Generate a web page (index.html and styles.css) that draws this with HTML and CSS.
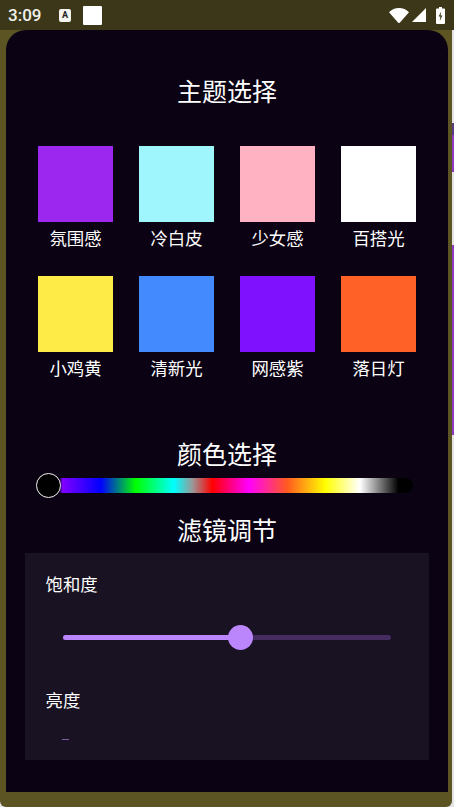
FILE: index.html
```html
<!DOCTYPE html>
<html lang="zh">
<head>
<meta charset="utf-8">
<title>主题选择</title>
<link rel="stylesheet" href="styles.css">
</head>
<body>
<header class="statusbar">
  <span class="time">3:09</span>
  <span class="app-a">A</span>
  <span class="app-blank"></span>
  <span class="status-right">
    <svg class="ic-wifi" viewBox="0 0 20 15"><path d="M0 4.200C2.600 1.600 6.100 0 10 0s7.400 1.600 10 4.200L11 14.500a1.300 1.300 0 0 1-2 0z"/></svg>
    <svg class="ic-signal" viewBox="0 0 14 14"><path d="M14 0v14H0z"/></svg>
    <svg class="ic-battery" viewBox="0 0 9 17"><path fill-rule="evenodd" d="M3 0h3v1.500h2a1 1 0 0 1 1 1V16a1 1 0 0 1-1 1H1a1 1 0 0 1-1-1V2.500a1 1 0 0 1 1-1h2zM5.200 4.500 2.600 9.500h1.800l-.6 4.500 2.600-5.600H4.600z"/></svg>
  </span>
</header>
<div class="below">
  <div class="scrim">
    <main class="sheet">
      <h2 class="title title-top">主题选择</h2>
      <div class="swatches">
        <div class="swatch-item"><div class="swatch c1"></div><span class="name">氛围感</span></div>
        <div class="swatch-item"><div class="swatch c2"></div><span class="name">冷白皮</span></div>
        <div class="swatch-item"><div class="swatch c3"></div><span class="name">少女感</span></div>
        <div class="swatch-item"><div class="swatch c4"></div><span class="name">百搭光</span></div>
        <div class="swatch-item"><div class="swatch c5"></div><span class="name">小鸡黄</span></div>
        <div class="swatch-item"><div class="swatch c6"></div><span class="name">清新光</span></div>
        <div class="swatch-item"><div class="swatch c7"></div><span class="name">网感紫</span></div>
        <div class="swatch-item"><div class="swatch c8"></div><span class="name">落日灯</span></div>
      </div>
      <h2 class="title title-color">颜色选择</h2>
      <div class="hue"><span class="hue-thumb"></span></div>
      <h2 class="title title-filter">滤镜调节</h2>
      <section class="panel">
        <div class="label">饱和度</div>
        <div class="slider">
          <div class="track"><div class="track-on"></div></div>
          <span class="thumb"></span>
        </div>
        <div class="label label-second">亮度</div>
        <div class="sliver"></div>
      </section>
    </main>
  </div>
  <div class="edge">
    <i class="e-light e1"></i><i class="e-dark"></i><i class="e-purple e2"></i><i class="e-light e3"></i><i class="e-purple e4"></i><i class="e-light e5"></i>
  </div>
</div>
</body>
</html>
```
FILE: styles.css
```css
* { box-sizing: border-box; }
html, body { margin: 0; height: 100%; }
body {
  width: 454px; height: 807px; overflow: hidden;
  display: flex; flex-direction: column;
  background: #e4e4e4;
  font-family: "Noto Sans CJK SC", "Noto Sans", sans-serif;
  color: #fff;
}
.statusbar {
  height: 30px; flex: none;
  background: #3b3718;
  display: flex; align-items: center;
  padding: 0 9px 0 8px;
}
.time { font: 500 17px/1 Roboto, sans-serif; color: #f1f1ec; width: 51px; }
.app-a {
  width: 12px; height: 13px; border-radius: 2px;
  background: #f4f4f0; color: #222;
  font: 700 9px/13px Roboto, sans-serif; text-align: center;
}
.app-blank { width: 19px; height: 19px; margin-left: 12px; background: #fff; border-radius: 1px; }
.status-right { margin-left: auto; display: flex; align-items: center; gap: 3px; }
.status-right svg { fill: #fff; display: block; }
.ic-wifi { width: 20px; height: 15px; }
.ic-signal { width: 14px; height: 14px; }
.ic-battery { width: 9px; height: 17px; margin-left: 7px; }

.below { flex: 1; display: flex; min-height: 0; }
.scrim {
  flex: 1; background: #5c5523;
  padding: 0 4px 15px 6px;
  border-radius: 0 0 6px 6px;
}
.sheet {
  height: 762px;
  background: #0b0214;
  border-radius: 20px 20px 0 0;
  padding-top: 43px;
  overflow: hidden;
  display: flex; flex-direction: column;
}
.title { margin: 0; font-size: 25px; font-weight: 400; line-height: 34px; text-align: center; }
.swatches {
  margin-top: 39px;
  display: grid; grid-template-columns: repeat(4, 75.700px);
  column-gap: 25.300px; row-gap: 22px;
  justify-content: center;
}
.swatch-item { display: flex; flex-direction: column; align-items: center; }
.swatch { width: 100%; height: 76px; }
.name { font-size: 17.400px; line-height: 32px; white-space: nowrap; }
.c1 { background: #9c27ee; }
.c2 { background: #a0f6fd; }
.c3 { background: #ffb3c2; }
.c4 { background: #ffffff; }
.c5 { background: #ffeb47; }
.c6 { background: #448aff; }
.c7 { background: #8011ff; }
.c8 { background: #ff6127; }

.title-color { margin-top: 52px; }
.hue {
  position: relative;
  margin: 8px 35px 0 42px;
  height: 15px; border-radius: 8px;
  background: linear-gradient(to right,
    #000 0, #000 3%, #8000ff 4%, #0000ff 14.500%, #00ff00 24%, #00ffff 34.500%,
    #999 39.500%, #ff0000 45%, #ff00ff 55%, #ff5a20 65.500%, #ffff00 76%,
    #ffffff 85.500%, #000 96%, #000 100%);
}
.hue-thumb {
  position: absolute; left: -12px; top: -5px;
  width: 25px; height: 25px; border-radius: 50%;
  background: #000; border: 1.700px solid #f2f2f2;
}
.title-filter { margin-top: 19px; }
.panel {
  margin: 7px 19px 0;
  height: 207px; padding: 19px 20.500px 0;
  background: #191222;
  position: relative;
}
.label { font-size: 17.400px; line-height: 24px; }
.label-second { margin-top: 48px; }
.slider { position: relative; margin: 39px 17.500px 0; height: 5px; }
.track { height: 5px; border-radius: 3px; background: #442c60; overflow: hidden; }
.track-on { width: 54%; height: 100%; background: #bb86fc; }
.thumb {
  position: absolute; left: 164.500px; top: -10px;
  width: 25px; height: 25px; border-radius: 50%;
  background: #bb86fc;
}
.sliver {
  width: 7px; height: 1px; margin: 27px 0 0 16.500px;
  background: #7a5ba0;
}
.edge { width: 2px; flex: none; display: flex; flex-direction: column; }
.edge i { display: block; }
.e-light { background: #e4e4e4; }
.e-purple { background: #8e3ac0; }
.e-dark { height: 12px; background: #5a3a80; }
.e1 { height: 93px; }
.e2 { height: 37px; }
.e3 { height: 73px; }
.e4 { height: 190px; }
.e5 { flex: 1; }
```
